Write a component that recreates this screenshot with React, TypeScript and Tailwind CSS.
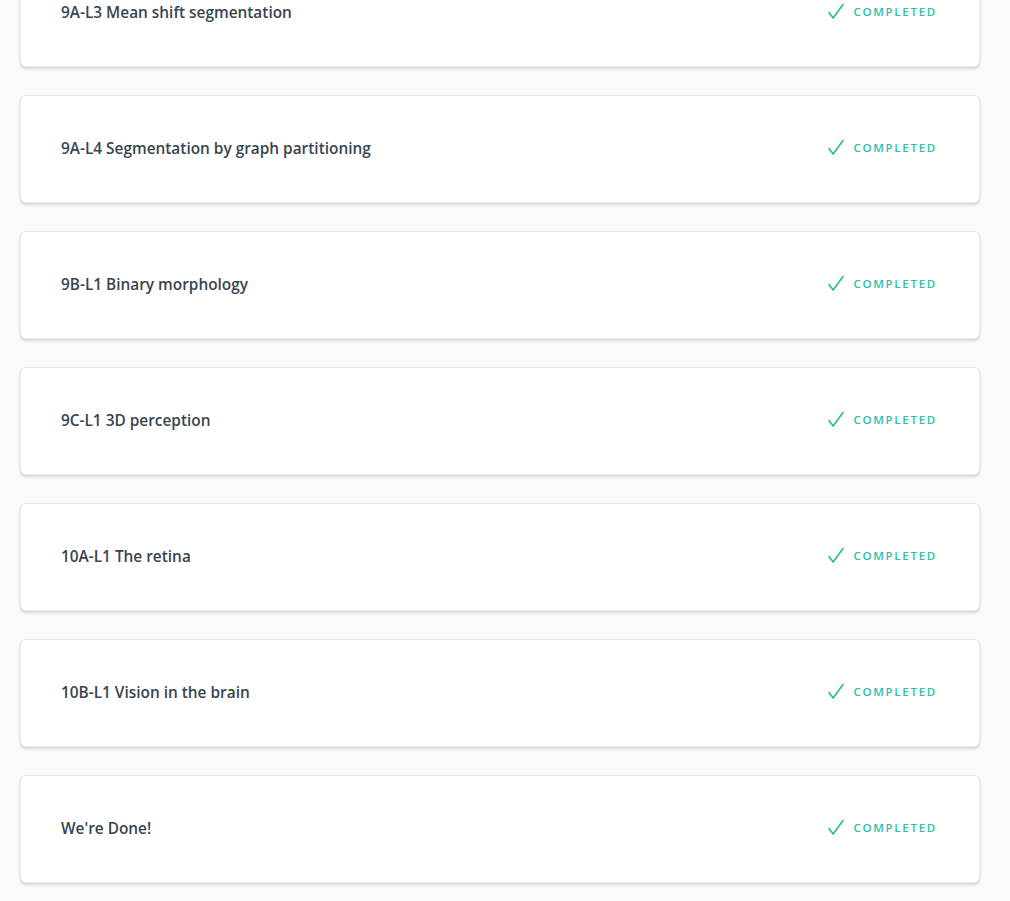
import React from "react";

const lessons = [
  "9A-L3 Mean shift segmentation",
  "9A-L4 Segmentation by graph partitioning",
  "9B-L1 Binary morphology",
  "9C-L1 3D perception",
  "10A-L1 The retina",
  "10B-L1 Vision in the brain",
  "We're Done!",
];

const Check = () => (
  <svg width="16" height="18" viewBox="0 0 16 18" fill="none">
    <path d="M1 9.5 L5.2 15 L15 1.5" stroke="#1bbf78" strokeWidth="1.5" strokeLinecap="round" strokeLinejoin="round" />
  </svg>
);

const LessonCard: React.FC<{ title: string }> = ({ title }) => (
  <div className="h-[108px] shrink-0 flex items-center justify-between bg-white border border-[#e6e8eb] rounded-[6px] shadow-[0_2px_3px_rgba(46,61,73,0.18)] pl-[40px] pr-[42px]">
    <span className="-mt-[1px] text-[15.4px] font-semibold text-[#38454f] leading-none">{title}</span>
    <span className="-mt-[2px] flex items-center gap-[9px]">
      <Check />
      <span className="text-[11.5px] font-semibold tracking-[0.15em] text-[#2ebfa6] leading-none">COMPLETED</span>
    </span>
  </div>
);

export default function App() {
  return (
    <div
      className="h-[901px] overflow-hidden bg-[#f9fafc] px-[20px] pr-[30px]"
      style={{ fontFamily: '"Open Sans", "Noto Sans", sans-serif' }}
    >
      <div className="-mt-[41px] flex flex-col gap-[28px]">
        {lessons.map((t) => (
          <LessonCard key={t} title={t} />
        ))}
      </div>
    </div>
  );
}
